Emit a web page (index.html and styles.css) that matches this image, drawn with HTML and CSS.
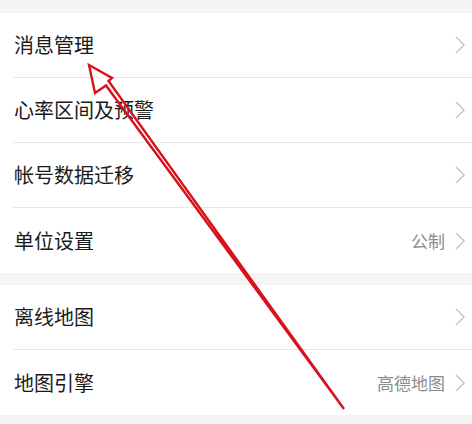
FILE: index.html
```html
<!DOCTYPE html>
<html lang="zh-CN">
<head>
  <meta charset="UTF-8">
  <meta name="viewport" content="width=device-width, initial-scale=1.0">
  <title>设置</title>
  <link rel="stylesheet" href="styles.css">
</head>
<body>

<div class="page">
  <div class="group">
    <div class="item">
      <span class="label">消息管理</span>
      <span class="extra"><svg class="chevron" viewBox="0 0 12 20"><path d="M2 2 L10 10 L2 18"/></svg></span>
    </div>
    <div class="item">
      <span class="label">心率区间及预警</span>
      <span class="extra"><svg class="chevron" viewBox="0 0 12 20"><path d="M2 2 L10 10 L2 18"/></svg></span>
    </div>
    <div class="item">
      <span class="label">帐号数据迁移</span>
      <span class="extra"><svg class="chevron" viewBox="0 0 12 20"><path d="M2 2 L10 10 L2 18"/></svg></span>
    </div>
    <div class="item">
      <span class="label">单位设置</span>
      <span class="extra"><span class="value">公制</span><svg class="chevron" viewBox="0 0 12 20"><path d="M2 2 L10 10 L2 18"/></svg></span>
    </div>
  </div>

  <div class="group">
    <div class="item">
      <span class="label">离线地图</span>
      <span class="extra"><svg class="chevron" viewBox="0 0 12 20"><path d="M2 2 L10 10 L2 18"/></svg></span>
    </div>
    <div class="item">
      <span class="label">地图引擎</span>
      <span class="extra"><span class="value">高德地图</span><svg class="chevron" viewBox="0 0 12 20"><path d="M2 2 L10 10 L2 18"/></svg></span>
    </div>
  </div>

  <!-- red annotation arrow drawn over the list -->
  <svg class="annotation" viewBox="0 0 472 424">
    <polygon points="89,65 112,78 108.5,81 344,409 106,85.5 95,93"/>
  </svg>
</div>

</body>
</html>
```

FILE: styles.css
```css
body {
    margin: 0;
    padding: 0;
    background: #f4f4f4;
    font-family: "Noto Sans CJK SC", "Noto Sans", sans-serif;
    color: #1a1a1a;
}

.page {
    position: relative;
    width: 472px;
    height: 424px;
    padding-top: 13px;
    box-sizing: border-box;
    overflow: hidden;
}

.group {
    background: #ffffff;
    margin-bottom: 12px;
}

.item {
    display: flex;
    align-items: center;
    justify-content: space-between;
    height: 65px;
    box-sizing: border-box;
    margin-left: 13px;
    padding-left: 1px;
    padding-right: 6px;
    border-bottom: 1px solid #e8e8e8;
}

.item:last-child {
    border-bottom: none;
}

.label {
    font-size: 20px;
    line-height: 1;
}

.extra {
    display: flex;
    align-items: center;
}

.value {
    font-size: 17px;
    color: #8c8c8c;
    margin-right: 9px;
}

.chevron {
    width: 12px;
    height: 20px;
    fill: none;
    stroke: #c6c6c6;
    stroke-width: 1.5;
}

.annotation {
    position: absolute;
    left: 0;
    top: 0;
    width: 472px;
    height: 424px;
    pointer-events: none;
}

.annotation polygon {
    fill: none;
    stroke: #d8121a;
    stroke-width: 2.4;
    stroke-linejoin: miter;
}
```
